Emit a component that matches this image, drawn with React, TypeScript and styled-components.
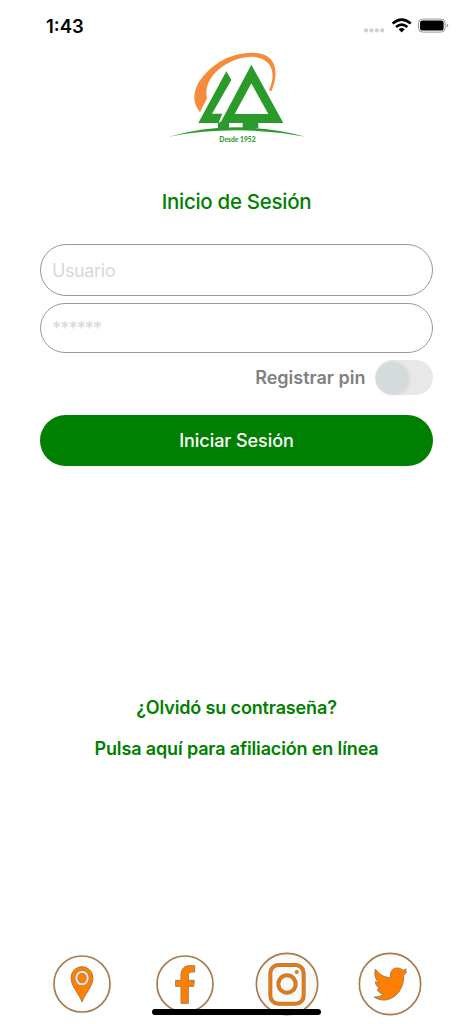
import React from "react";
import styled, { createGlobalStyle } from "styled-components";

const GlobalStyle = createGlobalStyle`
  *, *::before, *::after { box-sizing: border-box; }
  body { margin: 0; background: #fff; font-family: Inter, "Liberation Sans", sans-serif; }
`;

const Screen = styled.main`
  position: relative;
  display: flex;
  flex-direction: column;
  width: 473px;
  height: 1024px;
  margin: 0 auto;
  overflow: hidden;
  background: #fff;
`;

const StatusBar = styled.header`
  display: flex;
  justify-content: space-between;
  align-items: center;
  height: 45px;
  padding: 7px 24px 0 46px;
`;

const Clock = styled.time`
  font-size: 18.5px;
  font-weight: 600;
  line-height: 22px;
  color: #000;
`;

const StatusIcons = styled.svg`
  display: block;
  width: 86px;
  height: 18px;
`;

const Logo = styled.svg`
  display: block;
  flex: none;
  width: 155px;
  height: 105px;
  margin-left: 160px;
`;

const Title = styled.h1`
  margin: 37px 0 0;
  font-size: 20.5px;
  font-weight: 500;
  line-height: 30px;
  letter-spacing: -0.3px;
  text-align: center;
  color: #008000;
`;

const Form = styled.form`
  display: flex;
  flex-direction: column;
  padding: 27px 40px 0;
`;

const Field = styled.input<{ $height: number; $spacing: number }>`
  width: 393px;
  height: ${(p) => p.$height}px;
  margin: 0 0 7px;
  padding: 0 11px;
  border: 1px solid #999;
  border-radius: 26px;
  background: #fff;
  font: 400 18px Inter, sans-serif;
  letter-spacing: ${(p) => p.$spacing}px;
  outline: none;
  &::placeholder { color: #d5d9dc; opacity: 1; }
`;

const PinRow = styled.div`
  display: flex;
  align-items: center;
  justify-content: flex-end;
  gap: 9.5px;
  height: 35px;
`;

const PinLabel = styled.span`
  font-size: 18px;
  font-weight: 600;
  letter-spacing: 0;
  color: #808080;
`;

const Toggle = styled.button`
  width: 58px;
  height: 35px;
  padding: 1px;
  border: 0;
  border-radius: 18px;
  background: #e8e8e8;
`;

const Thumb = styled.span`
  display: block;
  width: 32px;
  height: 32px;
  border-radius: 50%;
  background: #d5dadd;
  box-shadow: 1px 1px 4px rgba(0, 0, 0, 0.1);
`;

const Submit = styled.button`
  width: 393px;
  height: 51px;
  margin-top: 19.5px;
  padding: 0;
  border: 0;
  border-radius: 26px;
  background: #008000;
  color: #fff;
  font: 500 18px Inter, sans-serif;
  letter-spacing: -0.05px;
`;

const Links = styled.nav`
  display: flex;
  flex-direction: column;
  align-items: center;
  gap: 11px;
  margin-top: 227px;
`;

const TextLink = styled.a`
  font-size: 18px;
  font-weight: 600;
  line-height: 30px;
  letter-spacing: -0.14px;
  color: #008000;
  text-decoration: none;
`;

const Social = styled.footer`
  display: grid;
  grid-template-columns: repeat(4, 102.5px);
  justify-items: center;
  margin: auto 0 0 31px;
  padding-bottom: 7px;
`;

const SocialIcon = styled.svg`
  display: block;
  width: 66px;
  height: 66px;
`;

const HomeIndicator = styled.div`
  position: absolute;
  left: 152px;
  bottom: 9px;
  width: 169px;
  height: 6px;
  border-radius: 3px;
  background: #000;
`;

function Brand() {
  return (
    <Logo viewBox="0 0 465 315" role="img" aria-label="LA, desde 1952">
      <path
        fill="#f68b3c"
        d="M120 202C108 188 102 172 103 153C105 117 136 79 177 52C217 27 276 15 314 30C348 44 357 86 334 139L327 135C345 94 341 59 307 42C275 27 226 39 190 63C151 89 133 125 141 160Z"
      />
      <g fill="#2a9a2a">
        <path d="M199 79L214 105L156 206H188L178 229L183 230L274 59L370 234H295V249H248V234H207V249H174V234H115ZM274 115L224 207H325Z" fillRule="evenodd" />
        <path d="M26 275Q128 247 231 247Q334 247 436 275Q334 256 231 256Q128 256 26 275Z" />
      </g>
      <path d="M188 207L178 233" stroke="#fff" strokeWidth="3" />
      <text x="178" y="289.5" fill="#329c32" fontFamily="Lato, sans-serif" fontWeight="900" fontSize="20" textLength="109" lengthAdjust="spacingAndGlyphs">
        Desde 1952
      </text>
    </Logo>
  );
}

function PhoneStatus() {
  return (
    <StatusIcons viewBox="0 0 86 18">
      <g fill="#cfcfcf">
        <circle cx="3" cy="13.4" r="2.1" /><circle cx="8.4" cy="13.4" r="2.1" />
        <circle cx="13.8" cy="13.4" r="2.1" /><circle cx="19.2" cy="13.4" r="2.1" />
      </g>
      <g fill="none" stroke="#000" strokeWidth="2.6">
        <path d="M29.6 6.6Q38.7-1.4 47.8 6.6" />
        <path d="M33 10Q38.7 5.2 44.4 10" />
      </g>
      <path d="M35.6 12.2Q38.7 9.7 41.8 12.2L38.7 15.4Z" />
      <rect x="55.5" y="2.1" width="26.6" height="13" rx="4" fill="none" stroke="#999" />
      <rect x="57" y="3.6" width="23.6" height="10" rx="2.6" />
      <path d="M83.6 6.6Q87 8.6 83.6 10.6Z" fill="#999" />
    </StatusIcons>
  );
}

const edge = "#a77b50";

function PinIcon() {
  return (
    <SocialIcon viewBox="-99 -99 198 198">
      <circle r="84" fill="#fff" stroke={edge} strokeWidth="5" />
      <path d="M0 54C-8 31-33 6-33-18A33 34 0 0 1 33-18C33 6 8 31 0 54Z" fill="#ff8000" stroke={edge} strokeWidth="3" />
      <ellipse cy="-18" rx="17" ry="19" fill="#ff8000" stroke={edge} strokeWidth="10" />
      <ellipse cy="-18" rx="17" ry="19" fill="none" stroke="#eee7df" strokeWidth="6" />
    </SocialIcon>
  );
}

function FacebookIcon() {
  return (
    <SocialIcon viewBox="-99 -99 198 198">
      <circle r="84" fill="#fff" stroke={edge} strokeWidth="5" />
      <path d="M-12 58V7H-28V-11H-12V-25C-12-46-2-55 14-55H29V-36H19Q10-36 10-27V-11H28L26 7H10V58Z" fill="#ff8000" stroke={edge} strokeWidth="3" />
    </SocialIcon>
  );
}

function InstagramIcon() {
  return (
    <SocialIcon viewBox="-99 -99 198 198">
      <circle r="92" fill="#fcfaf8" stroke={edge} strokeWidth="5" />
      <g fill="none" stroke={edge} strokeWidth="12">
        <rect x="-50" y="-57" width="100" height="116" rx="24" /><circle r="26" />
      </g>
      <g fill="none" stroke="#ea780b" strokeWidth="8">
        <rect x="-50" y="-57" width="100" height="116" rx="24" /><circle r="26" />
      </g>
      <circle cx="29" cy="-36" r="5" fill="#ea780b" stroke={edge} strokeWidth="2" />
    </SocialIcon>
  );
}

function TwitterIcon() {
  return (
    <SocialIcon viewBox="-99 -99 198 198">
      <circle r="92" fill="#fff" stroke={edge} strokeWidth="5" />
      <path d="M-44-45C-31-27-17-20 2-19C-1-38 8-49 23-48C31-48 36-43 39-41L49-45L44-36L50-37L41-26C43 5 25 34 3 43C-15 52-34 48-48 39C-36 40-27 37-20 30C-30 28-36 23-38 15H-29C-39 9-44 1-44-7L-34-4C-43-14-48-27-44-45Z" fill="#ff8000" stroke={edge} strokeWidth="3" strokeLinejoin="round" />
    </SocialIcon>
  );
}

export default function App() {
  return (
    <>
      <GlobalStyle />
      <Screen>
        <StatusBar><Clock>1:43</Clock><PhoneStatus /></StatusBar>
        <Brand />
        <Title>Inicio de Sesión</Title>
        <Form>
          <Field $height={52} $spacing={-0.4} placeholder="Usuario" aria-label="Usuario" />
          <Field $height={50} $spacing={-0.8} type="password" placeholder="******" aria-label="Contraseña" />
          <PinRow>
            <PinLabel>Registrar pin</PinLabel>
            <Toggle type="button" role="switch" aria-checked={false} aria-label="Registrar pin"><Thumb /></Toggle>
          </PinRow>
          <Submit type="button">Iniciar Sesión</Submit>
        </Form>
        <Links>
          <TextLink>¿Olvidó su contraseña?</TextLink>
          <TextLink>Pulsa aquí para afiliación en línea</TextLink>
        </Links>
        <Social><PinIcon /><FacebookIcon /><InstagramIcon /><TwitterIcon /></Social>
        <HomeIndicator />
      </Screen>
    </>
  );
}
